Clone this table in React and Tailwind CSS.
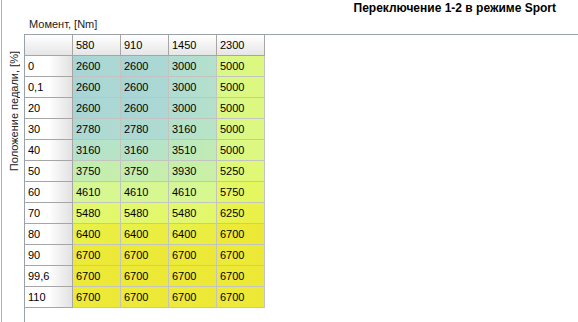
import React from "react";

const cols = [580, 910, 1450, 2300];
const rows = [
  ["0", [2600, 2600, 3000, 5000]],
  ["0,1", [2600, 2600, 3000, 5000]],
  ["20", [2600, 2600, 3000, 5000]],
  ["30", [2780, 2780, 3160, 5000]],
  ["40", [3160, 3160, 3510, 5000]],
  ["50", [3750, 3750, 3930, 5250]],
  ["60", [4610, 4610, 4610, 5750]],
  ["70", [5480, 5480, 5480, 6250]],
  ["80", [6400, 6400, 6400, 6700]],
  ["90", [6700, 6700, 6700, 6700]],
  ["99,6", [6700, 6700, 6700, 6700]],
  ["110", [6700, 6700, 6700, 6700]],
];

const stops = [
  [2600, [168, 212, 214]],
  [3000, [176, 220, 210]],
  [3500, [188, 232, 192]],
  [3750, [194, 236, 178]],
  [4600, [212, 246, 150]],
  [5000, [218, 248, 136]],
  [5500, [226, 248, 112]],
  [6250, [232, 244, 80]],
  [6700, [236, 234, 56]],
  [7200, [238, 228, 50]],
];

function color(v) {
  if (v <= stops[0][0]) return `rgb(${stops[0][1].join(",")})`;
  for (let i = 0; i < stops.length - 1; i++) {
    const [a, ca] = stops[i];
    const [b, cb] = stops[i + 1];
    if (v >= a && v <= b) {
      const t = (v - a) / (b - a);
      const c = ca.map((x, k) => Math.round(x + (cb[k] - x) * t));
      return `rgb(${c.join(",")})`;
    }
  }
  return `rgb(${stops[stops.length - 1][1].join(",")})`;
}

export default function App() {
  return (
    <div
      className="w-[578px] h-[322px] bg-white flex overflow-hidden text-black"
      style={{ fontFamily: '"Liberation Sans", Arial, sans-serif' }}
    >
      <div className="ml-[1px] w-[1px] bg-[#a9b5c6]" />
      <div className="flex-1 flex flex-col">
        <div className="h-[34px] flex flex-col">
          <div className="flex justify-end pr-[22px] pt-[1px]">
            <span className="text-[12px] leading-[14px] font-bold">
              Переключение 1-2 в режиме Sport
            </span>
          </div>
          <div className="pl-[27px] mt-[3px] text-[11px] leading-[13px] text-[#222]">
            Момент, [Nm]
          </div>
        </div>
        <div className="flex flex-1">
          <div className="w-[22px] flex items-start justify-center pt-[17px] pl-[2px]">
            <span className="text-[11px] leading-[13px] text-[#222] [writing-mode:vertical-rl] rotate-180 whitespace-nowrap">
              Положение педали, [%]
            </span>
          </div>
          <div className="flex-1 border-l border-t border-[#9aa1a9]">
            <div className="grid grid-cols-[48px_48px_48px_48px_48px] w-[240px] text-[11px] leading-[20px]">
              <div className="h-[21px] border-r border-b border-[#a6a6a6] bg-linear-to-b from-white to-[#e6e6e6]" />
              {cols.map((c) => (
                <div
                  key={c}
                  className="h-[21px] pl-[3px] border-r border-b border-[#a6a6a6] bg-linear-to-b from-white to-[#e6e6e6]"
                >
                  {c}
                </div>
              ))}
              {rows.map(([label, vals]) => (
                <React.Fragment key={label}>
                  <div className="h-[21px] pl-[3px] border-r border-b border-[#a6a6a6] bg-linear-to-r from-white via-white to-[#e2e2e2]">
                    {label}
                  </div>
                  {vals.map((v, i) => (
                    <div
                      key={i}
                      className="h-[21px] pl-[3px] border-r border-b border-[#c2c4c0]"
                      style={{
                        background: `linear-gradient(to right, ${color(v)}, ${color(v + 180)})`,
                      }}
                    >
                      {v}
                    </div>
                  ))}
                </React.Fragment>
              ))}
            </div>
          </div>
        </div>
      </div>
    </div>
  );
}
